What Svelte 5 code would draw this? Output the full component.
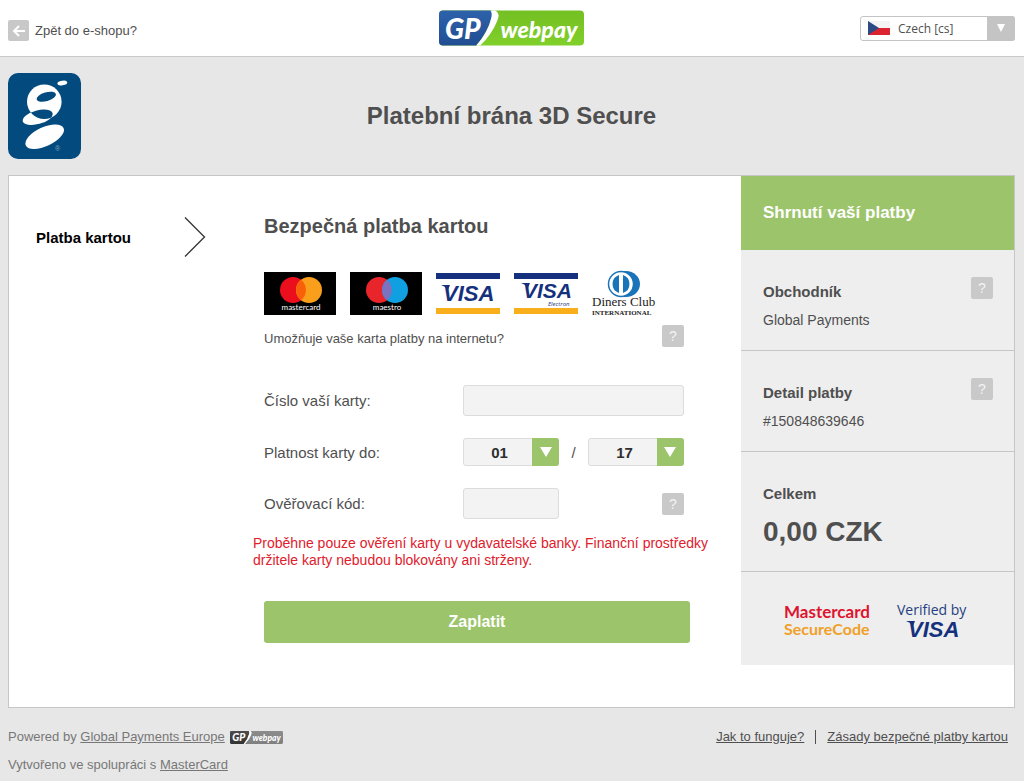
<script>
    let lang = $state('cs');
    let cardNumber = $state('');
    let month = $state('01');
    let year = $state('17');
    let code = $state('');

    const months = ['01', '02', '03', '04', '05', '06', '07', '08', '09', '10', '11', '12'];
    const years = ['17', '18', '19', '20', '21', '22', '23', '24', '25', '26'];

    const details = [
        { title: 'Obchodník', text: 'Global Payments' },
        { title: 'Detail platby', text: '#150848639646' }
    ];

    const submit = (e) => {
        e.preventDefault();
    };
</script>

{#snippet webpayLogo(id, width, height, left, leftDark, right, rightDark)}
    <svg class="webpay" {width} {height} viewBox="0 0 144 35" role="img" aria-label="GP webpay">
        <defs>
            <linearGradient id="{id}-left" x1="0" y1="0" x2="0" y2="1">
                <stop offset="0" stop-color={left} />
                <stop offset="1" stop-color={leftDark} />
            </linearGradient>
            <linearGradient id="{id}-right" x1="0" y1="0" x2="0" y2="1">
                <stop offset="0" stop-color={rightDark} />
                <stop offset="1" stop-color={right} />
            </linearGradient>
        </defs>
        <rect width="144" height="35" rx="4" fill="url(#{id}-right)" />
        <path d="M4 0H52Q54 3 52 8Q48 22 37 35H4Q0 35 0 31V4Q0 0 4 0Z" fill="url(#{id}-left)" />
        <path d="M51 0H56Q61 3 58 10Q53 23 41 35H37Q49 21 52 7Q53 2 51 0Z" fill="#fff" />
        <text x="6" y="28" font-size="28" class="brand">GP</text>
        <text x="61" y="27" font-size="23" class="brand">webpay</text>
    </svg>
{/snippet}

{#snippet arrow()}
    <svg class="arrow" width="12" height="10" viewBox="0 0 12 10" aria-hidden="true">
        <path d="M0 0H12L6 10Z" fill="#fff" />
    </svg>
{/snippet}

{#snippet help()}
    <button type="button" class="help" aria-label="Nápověda">?</button>
{/snippet}

<header class="top">
    <a class="back" href="#eshop">
        <svg width="21" height="21" viewBox="0 0 21 21" aria-hidden="true">
            <rect width="21" height="21" rx="2" fill="#c8c8c8" />
            <path d="M17 11H6M11 6L6 11L11 16" fill="none" stroke="#fff" stroke-width="2" />
        </svg>
        <span>Zpět do e-shopu?</span>
    </a>
    {@render webpayLogo('main', 145, 36, '#2d62ab', '#214d92', '#80d02b', '#74bf22')}
    <div class="lang">
        <select bind:value={lang} aria-label="Jazyk">
            <option value="cs">Czech [cs]</option>
            <option value="en">English [en]</option>
        </select>
        <svg class="flag" width="22" height="14" viewBox="0 0 22 14" aria-hidden="true">
            <rect width="22" height="14" fill="#f4f4f4" />
            <rect y="7" width="22" height="7" fill="#dc2430" />
            <path d="M0 0L11 7L0 14Z" fill="#2c4a86" />
        </svg>
        <span class="lang-arrow">
            <svg width="8" height="8" viewBox="0 0 8 8" aria-hidden="true">
                <path d="M0 0H8L4 8Z" fill="#fff" />
            </svg>
        </span>
    </div>
</header>

<div class="hero">
    <svg width="73" height="86" viewBox="0 0 73 86" role="img" aria-label="Global Payments">
        <defs>
            <clipPath id="head">
                <ellipse cx="36.3" cy="28.7" rx="17.3" ry="17.3" />
            </clipPath>
        </defs>
        <rect width="73" height="86" rx="10" fill="#034a7e" />
        <g fill="#fff">
            <ellipse cx="54.3" cy="10" rx="5" ry="2.3" transform="rotate(-10 54.3 10)" />
            <ellipse cx="36.3" cy="28.7" rx="17.3" ry="17.3" />
            <ellipse cx="29.7" cy="44.3" rx="15.4" ry="6.8" transform="rotate(-15 29.7 44.3)" />
            <ellipse cx="36.7" cy="63.7" rx="20.8" ry="9.5" transform="rotate(-25 36.7 63.7)" />
        </g>
        <g fill="#034a7e">
            <ellipse cx="38.3" cy="23.7" rx="10" ry="4.4" transform="rotate(-16 38.3 23.7)" />
            <g clip-path="url(#head)">
                <ellipse cx="29.7" cy="44.3" rx="15.4" ry="6.8" transform="rotate(-15 29.7 44.3)" />
            </g>
        </g>
        <text x="47" y="78" font-size="7" fill="#7fa5c4">®</text>
    </svg>
    <h1>Platební brána 3D Secure</h1>
</div>

<main class="panel">
    <nav class="steps">
        <a href="#karta">Platba kartou</a>
        <svg width="22" height="40" viewBox="0 0 22 40" aria-hidden="true">
            <path d="M1 0.5L20.5 20L1 39.5" fill="none" stroke="#333" stroke-width="1.3" />
        </svg>
    </nav>

    <form class="payment" onsubmit={submit}>
        <h2>Bezpečná platba kartou</h2>

        <div class="cards">
            <svg width="72" height="43" viewBox="0 0 72 43" role="img" aria-label="mastercard">
                <rect width="72" height="43" />
                <circle cx="29" cy="18" r="13" fill="#eb0f1e" />
                <circle cx="45" cy="18" r="13" fill="#f99f1b" />
                <path d="M37 7.8A13 13 0 0 1 37 28.2A13 13 0 0 1 37 7.8Z" fill="#f9600a" />
                <text x="37" y="38" font-size="8" class="label">mastercard</text>
            </svg>
            <svg width="72" height="43" viewBox="0 0 72 43" role="img" aria-label="maestro">
                <rect width="72" height="43" />
                <circle cx="29" cy="18" r="13" fill="#e8252b" />
                <circle cx="45" cy="18" r="13" fill="#109fe0" />
                <path d="M37 7.8A13 13 0 0 1 37 28.2A13 13 0 0 1 37 7.8Z" fill="#7b72c0" />
                <text x="37" y="38" font-size="8" class="label">maestro</text>
            </svg>
            <svg width="64" height="43" viewBox="0 0 64 43" role="img" aria-label="VISA">
                <rect y="1" width="64" height="6" fill="#15317e" />
                <rect y="36" width="64" height="6" fill="#f9ae1c" />
                <text x="7" y="29" font-size="22" class="visa">VISA</text>
                <path d="M5 13H14L12 18Q9 14 5 13Z" fill="#15317e" />
            </svg>
            <svg width="64" height="43" viewBox="0 0 64 43" role="img" aria-label="VISA Electron">
                <rect y="1" width="64" height="6" fill="#15317e" />
                <rect y="36" width="64" height="6" fill="#f9ae1c" />
                <text x="9" y="26" font-size="21" class="visa">VISA</text>
                <path d="M7 11H16L14 16Q11 12 7 11Z" fill="#15317e" />
                <text x="34" y="34" font-size="6" class="electron">Electron</text>
            </svg>
            <svg width="64" height="43" viewBox="0 0 64 43" role="img" aria-label="Diners Club International">
                <path d="M29 -1H34C42 -1 48 5 48 12C48 19 42 25 34 25H29Z" fill="#1a74b8" />
                <circle cx="29" cy="12" r="12.5" fill="#fff" stroke="#1a74b8" stroke-width="1.5" />
                <path d="M27 3A9.5 9.5 0 0 0 27 21ZM31 3A9.5 9.5 0 0 1 31 21Z" fill="#1a74b8" />
                <text x="0" y="34" font-size="13" class="diners">Diners Club</text>
                <text x="0" y="43" font-size="7" class="diners international">INTERNATIONAL</text>
            </svg>
        </div>

        <div class="question">
            <span>Umožňuje vaše karta platby na internetu?</span>
            {@render help()}
        </div>

        <div class="fields">
            <label for="number">Číslo vaší karty:</label>
            <input id="number" type="text" bind:value={cardNumber} />

            <label for="month">Platnost karty do:</label>
            <div class="expiry">
                <div class="select">
                    <select id="month" bind:value={month}>
                        {#each months as m}
                            <option>{m}</option>
                        {/each}
                    </select>
                    <span class="select-arrow">{@render arrow()}</span>
                </div>
                <span>/</span>
                <div class="select">
                    <select aria-label="Rok" bind:value={year}>
                        {#each years as y}
                            <option>{y}</option>
                        {/each}
                    </select>
                    <span class="select-arrow">{@render arrow()}</span>
                </div>
            </div>

            <label for="code">Ověřovací kód:</label>
            <div class="code">
                <input id="code" type="text" bind:value={code} />
                {@render help()}
            </div>
        </div>

        <p class="notice">
            Proběhne pouze ověření karty u vydavatelské banky. Finanční prostředky držitele karty nebudou blokovány ani strženy.
        </p>

        <button type="submit" class="pay">Zaplatit</button>
    </form>

    <aside class="summary">
        <h2>Shrnutí vaší platby</h2>
        {#each details as item}
            <section>
                <div>
                    <h3>{item.title}</h3>
                    <p>{item.text}</p>
                </div>
                {@render help()}
            </section>
        {/each}
        <section class="total">
            <div>
                <h3>Celkem</h3>
                <strong>0,00 CZK</strong>
            </div>
        </section>
        <div class="secure">
            <svg width="88" height="36" viewBox="0 0 88 36" role="img" aria-label="Mastercard SecureCode">
                <text x="0" y="16" font-size="17" class="mc">Mastercard</text>
                <text x="0" y="33" font-size="16" class="sc">SecureCode</text>
            </svg>
            <svg width="70" height="36" viewBox="0 0 70 36" role="img" aria-label="Verified by VISA">
                <text x="0" y="13" font-size="14" class="verified">Verified by</text>
                <text x="11" y="35" font-size="22" class="visa">VISA</text>
                <path d="M9 19H18L16 24Q13 20 9 19Z" fill="#15317e" />
            </svg>
        </div>
    </aside>
</main>

<footer>
    <div class="credits">
        <p>
            <span>Powered by <a href="#gpe">Global Payments Europe</a></span>
            {@render webpayLogo('small', 53, 13, '#4c4c4c', '#333', '#808080', '#8c8c8c')}
        </p>
        <p><span>Vytvořeno ve spolupráci s <a href="#mastercard">MasterCard</a></span></p>
    </div>
    <div class="links">
        <a href="#jak">Jak to funguje?</a>
        <span class="divider"></span>
        <a href="#zasady">Zásady bezpečné platby kartou</a>
    </div>
</footer>

<style>
    :global(body) {
        margin: 0;
        background: #e7e7e7;
        color: #4f4f4f;
        font-family: "Liberation Sans", Arial, sans-serif;
        font-size: 13px;
    }

    h1, h2, h3, p {
        margin: 0;
    }

    svg {
        display: block;
        flex: none;
        overflow: visible;
    }

    input, select, button {
        box-sizing: border-box;
        margin: 0;
        font-family: inherit;
        color: inherit;
    }

    .top {
        display: grid;
        grid-template-columns: 1fr auto 1fr;
        align-items: center;
        height: 56px;
        padding: 0 9px 0 8px;
        background: #fff;
        border-bottom: 1px solid #c9c9c9;
    }

    .back {
        display: flex;
        align-items: center;
        gap: 6px;
        padding-top: 5px;
        color: inherit;
        text-decoration: none;
    }

    .brand {
        fill: #fff;
        font-family: Lato, sans-serif;
        font-weight: 900;
        font-style: italic;
    }

    .lang {
        justify-self: end;
        display: grid;
        grid-template-columns: 8px 1fr 28px;
        align-items: center;
        width: 155px;
        height: 25px;
    }

    .lang select {
        grid-area: 1 / 1 / 2 / 4;
        width: 100%;
        height: 25px;
        padding: 0 0 0 37px;
        appearance: none;
        background: #fff;
        border: 1px solid #c4c4c4;
        border-radius: 3px;
        font-family: "Open Sans", sans-serif;
        font-size: 12px;
    }

    .flag {
        grid-area: 1 / 2;
        pointer-events: none;
    }

    .lang-arrow {
        grid-area: 1 / 3;
        display: grid;
        place-items: center;
        height: 25px;
        background: #c4c4c4;
        border-radius: 0 3px 3px 0;
        pointer-events: none;
    }

    .hero {
        display: grid;
        grid-template-columns: 73px 1fr 73px;
        align-items: center;
        padding: 16px 9px 16px 8px;
    }

    h1 {
        font-size: 24px;
        text-align: center;
    }

    .panel {
        display: grid;
        grid-template-columns: 244px 1fr 273px;
        margin: 0 9px 0 8px;
        background: #fff;
        border: 1px solid #c6c6c6;
    }

    .steps {
        display: flex;
        align-items: center;
        justify-content: space-between;
        align-self: start;
        padding: 41px 47px 0 27px;
    }

    .steps a {
        color: #000;
        font-size: 15px;
        font-weight: bold;
        text-decoration: none;
    }

    .payment {
        padding: 38px 24px 64px 0;
    }

    .payment h2 {
        padding-left: 11px;
        font-size: 20px;
        line-height: 24px;
    }

    .cards {
        display: flex;
        gap: 14px;
        margin-top: 34px;
        padding-left: 11px;
    }

    .label {
        fill: #fff;
        font-family: Lato, sans-serif;
        text-anchor: middle;
    }

    .visa {
        fill: #15317e;
        font-family: "Liberation Sans", Arial, sans-serif;
        font-weight: bold;
        font-style: italic;
    }

    .electron {
        fill: #15317e;
        font-family: "Open Sans", sans-serif;
        font-style: italic;
    }

    .diners {
        fill: #222;
        font-family: "Liberation Serif", serif;
    }

    .international {
        font-weight: bold;
    }

    .question {
        display: flex;
        align-items: flex-end;
        justify-content: space-between;
        margin-top: 10px;
        padding: 0 33px 0 11px;
        line-height: 16px;
    }

    .help {
        width: 22px;
        height: 22px;
        padding: 0;
        background: #c9c9c9;
        border: 0;
        border-radius: 2px;
        color: #f4f4f4;
        font-size: 14px;
    }

    .fields {
        display: grid;
        grid-template-columns: 199px 1fr;
        align-items: center;
        row-gap: 22px;
        margin-top: 38px;
        padding: 0 33px 0 11px;
        font-size: 15px;
    }

    .fields input {
        width: 100%;
        height: 31px;
        padding: 0 8px;
        background: #f3f3f3;
        border: 1px solid #dcdcdc;
        border-radius: 3px;
        font-size: 15px;
    }

    .expiry, .code {
        display: flex;
        align-items: center;
        justify-content: space-between;
    }

    .fields .code input {
        width: 96px;
    }

    .select {
        display: grid;
        grid-template-columns: 1fr 27px;
        width: 96px;
    }

    .select select {
        grid-area: 1 / 1 / 2 / 3;
        width: 100%;
        height: 28px;
        padding: 0 23px 0 0;
        appearance: none;
        background: #f3f3f3;
        border: 1px solid #dcdcdc;
        border-radius: 3px;
        color: #2e2e2e;
        font-size: 15px;
        font-weight: bold;
        text-align: center;
        text-align-last: center;
    }

    .select-arrow {
        grid-area: 1 / 2;
        display: grid;
        place-items: center;
        background: #9cc46b;
        border-radius: 0 3px 3px 0;
        pointer-events: none;
    }

    .notice {
        margin-top: 16px;
        color: #e0202c;
        font-size: 14px;
        line-height: 17px;
    }

    .pay {
        display: block;
        width: calc(100% - 38px);
        height: 42px;
        margin: 32px 27px 0 11px;
        background: #9cc46b;
        border: 0;
        border-radius: 3px;
        color: #fff;
        font-size: 16px;
        font-weight: bold;
    }

    .summary h2 {
        padding: 0 22px;
        background: #9cc46b;
        color: #fff;
        font-size: 17px;
        line-height: 74px;
    }

    .summary section {
        display: flex;
        justify-content: space-between;
        align-items: flex-start;
        padding: 27px 21px 16px 22px;
        background: #eee;
        border-bottom: 1px solid #c6c6c6;
    }

    h3 {
        padding-top: 1px;
        font-size: 15px;
        line-height: 28px;
    }

    .summary p {
        font-size: 14px;
        line-height: 28px;
    }

    .total strong {
        font-size: 28px;
        line-height: 47px;
    }

    .secure {
        display: flex;
        justify-content: center;
        gap: 25px;
        padding: 30px 4px 27px 0;
        background: #eee;
    }

    .mc {
        fill: #df1430;
        font-family: Lato, sans-serif;
        font-weight: bold;
    }

    .sc {
        fill: #f0a028;
        font-family: Lato, sans-serif;
        font-weight: bold;
    }

    .verified {
        fill: #25407f;
        font-family: "Open Sans", sans-serif;
    }

    footer {
        display: flex;
        justify-content: space-between;
        padding: 15px 16px 1px 8px;
        color: #777;
        line-height: 28px;
    }

    footer a {
        color: inherit;
    }

    .credits p {
        display: flex;
        align-items: center;
        gap: 5px;
    }

    .links {
        display: flex;
        align-items: center;
        align-self: flex-start;
        gap: 11px;
        color: #4f4f4f;
    }

    .divider {
        width: 1px;
        height: 14px;
        background: #4f4f4f;
    }
</style>
